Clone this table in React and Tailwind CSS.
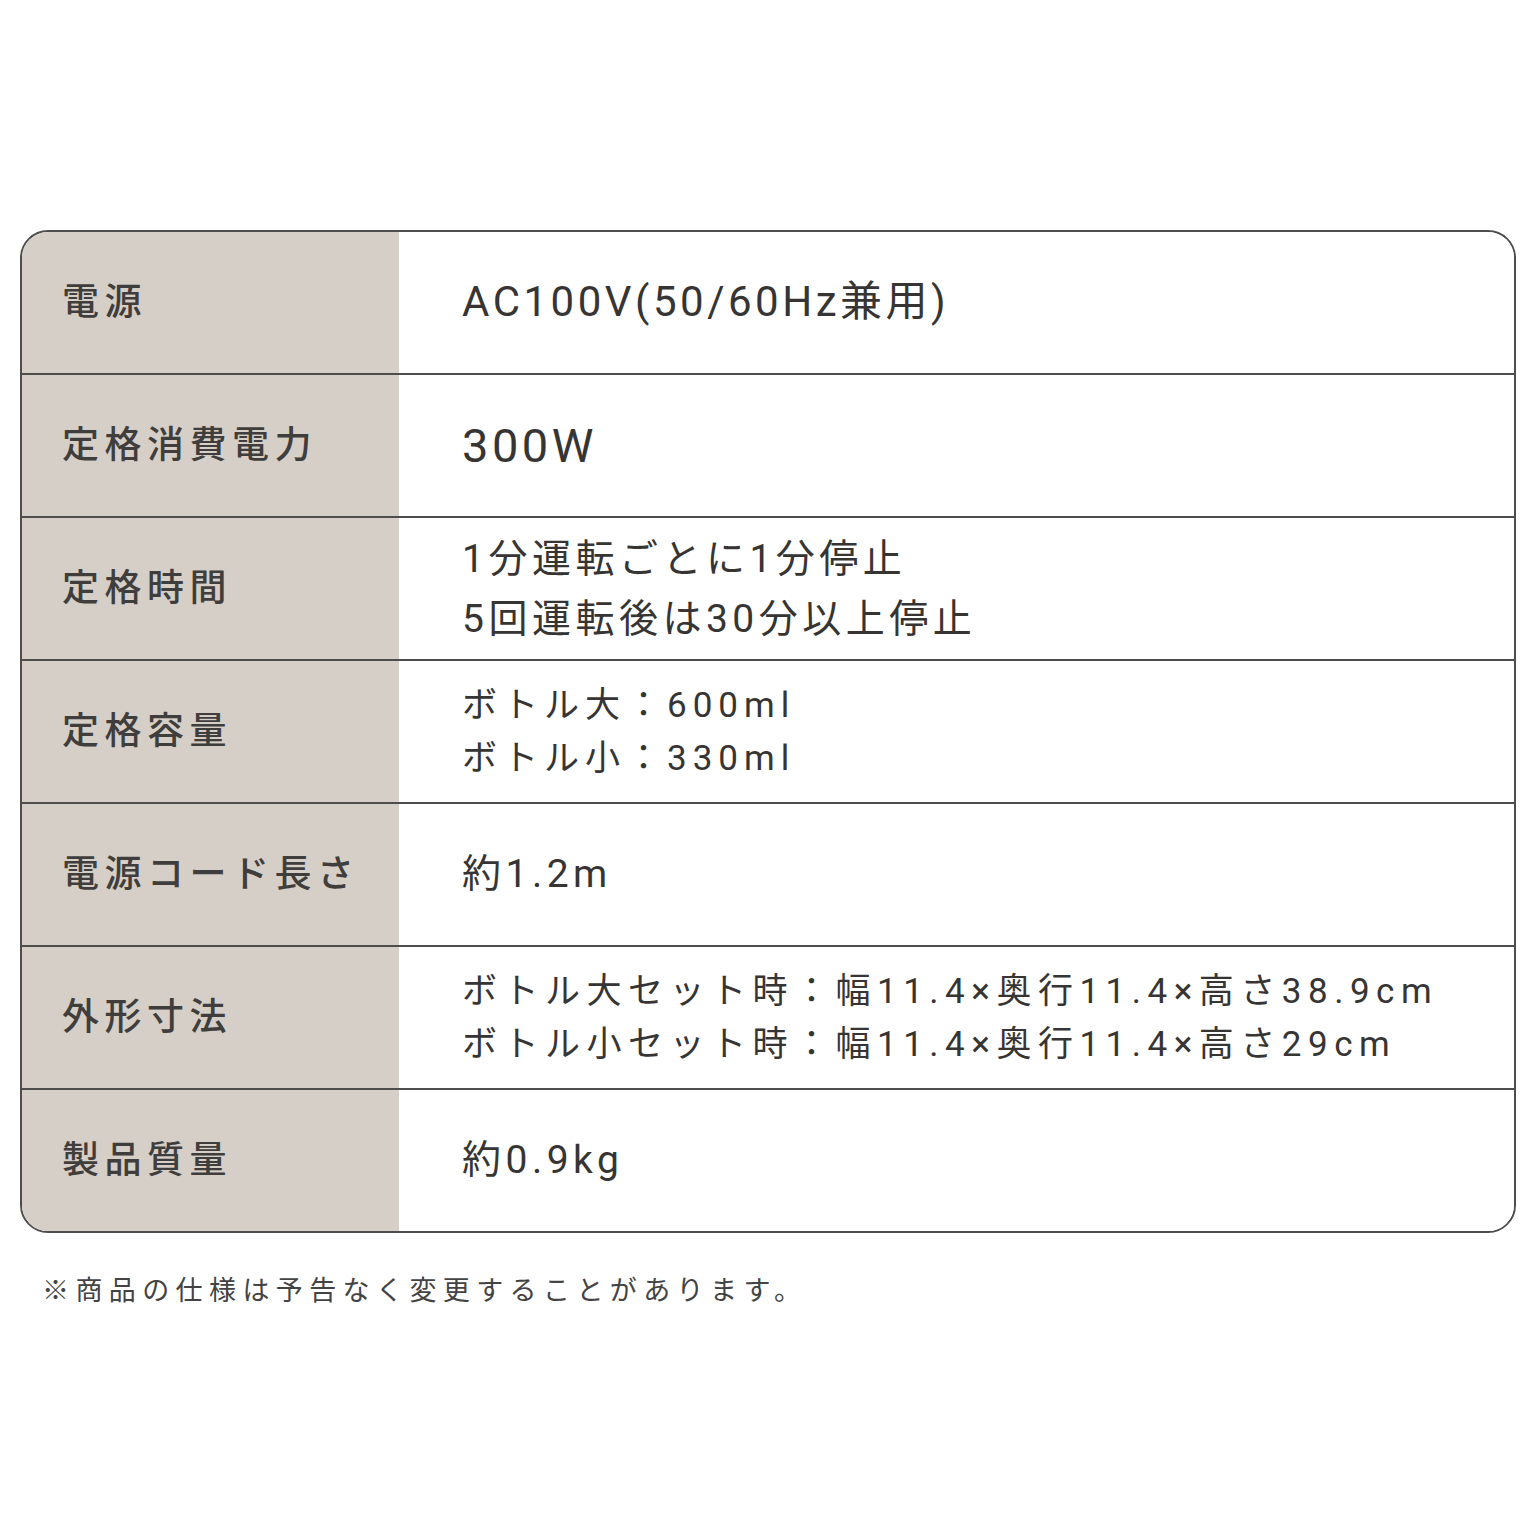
const rows = [
  {
    label: '電源',
    lines: ['AC100V(50/60Hz兼用)'],
    text: 'text-[42px] tracking-[3.5px] leading-[1.4]',
  },
  {
    label: '定格消費電力',
    lines: ['300W'],
    text: 'text-[47px] tracking-[3.5px] leading-[1.4]',
  },
  {
    label: '定格時間',
    lines: ['1分運転ごとに1分停止', '5回運転後は30分以上停止'],
    text: 'text-[39px] tracking-[4.5px] leading-[60px]',
  },
  {
    label: '定格容量',
    lines: ['ボトル大：600ml', 'ボトル小：330ml'],
    text: 'text-[35px] tracking-[6px] leading-[53px]',
  },
  {
    label: '電源コード長さ',
    lines: ['約1.2m'],
    text: 'text-[39px] tracking-[4.5px] leading-[1.4]',
  },
  {
    label: '外形寸法',
    lines: [
      'ボトル大セット時：幅11.4×奥行11.4×高さ38.9cm',
      'ボトル小セット時：幅11.4×奥行11.4×高さ29cm',
    ],
    text: 'text-[35px] tracking-[6.5px] leading-[53px]',
  },
  {
    label: '製品質量',
    lines: ['約0.9kg'],
    text: 'text-[39px] tracking-[4.5px] leading-[1.4]',
  },
];

const SpecRow = ({ row, first }) => (
  <div
    className={
      'grid grid-cols-[377px_1fr] ' +
      (first ? 'h-[141px]' : 'h-[143px] border-t-2 border-[#4f4d4b]')
    }
  >
    <div className="flex items-center bg-[#d6cfc8] pl-[40px]">
      <span className="text-[37px] font-medium leading-none tracking-[5.5px] text-[#403e3c]">
        {row.label}
      </span>
    </div>
    <div className="flex flex-col justify-center bg-white pl-[63px]">
      {row.lines.map((line) => (
        <p key={line} className={'whitespace-nowrap text-[#363534] ' + row.text}>
          {line}
        </p>
      ))}
    </div>
  </div>
);

const App = () => {
  return (
    <div
      className="min-h-[1536px] w-[1536px] bg-white px-[20px] pt-[230px]"
      style={{ fontFamily: 'Roboto, "Noto Sans CJK JP", sans-serif' }}
    >
      <div className="overflow-hidden rounded-[28px] border-2 border-[#4f4d4b]">
        {rows.map((row, i) => (
          <SpecRow key={row.label} row={row} first={i === 0} />
        ))}
      </div>
      <p className="mt-[40px] pl-[22px] text-[27px] leading-[36px] tracking-[6.4px] text-[#444343]">
        ※商品の仕様は予告なく変更することがあります。
      </p>
    </div>
  );
};

export default App;
